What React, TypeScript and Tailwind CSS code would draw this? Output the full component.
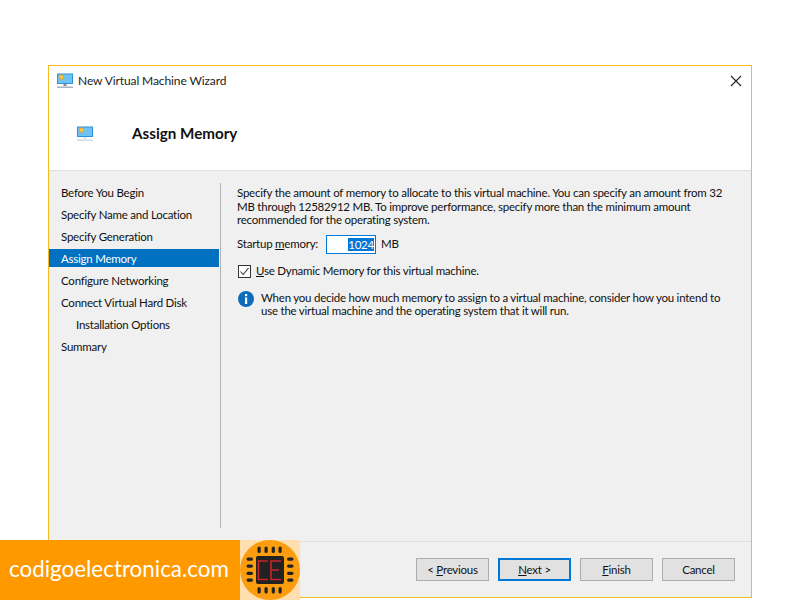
const steps = [
  { label: "Before You Begin" },
  { label: "Specify Name and Location" },
  { label: "Specify Generation" },
  { label: "Assign Memory", active: true },
  { label: "Configure Networking" },
  { label: "Connect Virtual Hard Disk" },
  { label: "Installation Options", indent: true },
  { label: "Summary" },
];

function VmIcon({ faded }: { faded?: boolean }) {
  return (
    <svg viewBox="0 0 16 16" width="16" height="16">
      <rect x="0" y="0.5" width="16" height="10.5" fill="#2f8fd8" />
      <rect x="1" y="1.5" width="14" height="8.5" fill="#6fc3f3" />
      <circle cx="4.5" cy="4" r="2.6" fill="#f5a623" />
      <circle cx="4.5" cy="4" r="1.3" fill="#ffd75e" />
      <rect x="6.5" y="11" width="3" height="2" fill={faded ? "#dfe3e6" : "#7d8a94"} />
      <rect x="0" y="13.5" width="16" height="1.5" fill={faded ? "#d5dadd" : "#a9b4bc"} />
    </svg>
  );
}

function WizardButton({ children, focused }: { children: React.ReactNode; focused?: boolean }) {
  return (
    <button
      className={
        focused
          ? "w-[73px] h-[23px] bg-[#e1e1e1] border-2 border-[#0078d7] text-[11.5px] tracking-[-0.23px] text-[#111] flex items-center justify-center"
          : "w-[73px] h-[23px] bg-[#e1e1e1] border border-[#adadad] text-[11.5px] tracking-[-0.23px] text-[#111] flex items-center justify-center"
      }
    >
      <span>{children}</span>
    </button>
  );
}

function Logo() {
  return (
    <svg viewBox="0 0 60 60" width="60" height="60">
      <circle cx="30" cy="30" r="30" fill="#fb9d0f" />
      <g fill="#222">
        <rect x="16" y="16" width="28" height="28" rx="2" />
        <rect x="17.5" y="6.5" width="3.2" height="6.5" rx="1.6" />
        <rect x="24.5" y="6.5" width="3.2" height="6.5" rx="1.6" />
        <rect x="31.7" y="6.5" width="3.2" height="6.5" rx="1.6" />
        <rect x="38.5" y="6.5" width="3.2" height="6.5" rx="1.6" />
        <rect x="17.5" y="47" width="3.2" height="6.5" rx="1.6" />
        <rect x="24.5" y="47" width="3.2" height="6.5" rx="1.6" />
        <rect x="31.7" y="47" width="3.2" height="6.5" rx="1.6" />
        <rect x="38.5" y="47" width="3.2" height="6.5" rx="1.6" />
        <rect x="6.5" y="17.5" width="6.5" height="3.2" rx="1.6" />
        <rect x="6.5" y="24.5" width="6.5" height="3.2" rx="1.6" />
        <rect x="6.5" y="31.7" width="6.5" height="3.2" rx="1.6" />
        <rect x="6.5" y="38.5" width="6.5" height="3.2" rx="1.6" />
        <rect x="47" y="17.5" width="6.5" height="3.2" rx="1.6" />
        <rect x="47" y="24.5" width="6.5" height="3.2" rx="1.6" />
        <rect x="47" y="31.7" width="6.5" height="3.2" rx="1.6" />
        <rect x="47" y="38.5" width="6.5" height="3.2" rx="1.6" />
      </g>
      <path d="M28 21H18.5V39.5H28M41 21H31V39.5H41M31 30H39" fill="none" stroke="#c8262c" strokeWidth="1.6" />
    </svg>
  );
}

export default function App() {
  return (
    <div className="relative w-[800px] h-[600px] overflow-hidden bg-white pt-[65px] pl-[48px] font-['Lato',sans-serif] text-[11.5px] tracking-[-0.23px] text-[#111]">
      <div className="w-[704px] h-[533px] border border-[#f6b922] flex flex-col bg-[#f0f0f0]">
        {/* title + header */}
        <div className="h-[105px] bg-white border-b border-[#dfdfdf] shrink-0">
          <div className="h-[30px] flex items-center pl-[8px] pr-[9px]">
            <VmIcon />
            <span className="ml-[5px] text-[12px] tracking-[-0.1px] text-[#222]">New Virtual Machine Wizard</span>
            <svg className="ml-auto" viewBox="0 0 12 12" width="12" height="12">
              <path d="M1 1L11 11M11 1L1 11" stroke="#222" strokeWidth="1.1" fill="none" />
            </svg>
          </div>
          <div className="flex items-center pl-[28px] mt-[28px]">
            <VmIcon faded />
            <span className="ml-[39px] -mt-[2px] text-[15.2px] tracking-normal font-bold text-[#111]">Assign Memory</span>
          </div>
        </div>

        {/* body */}
        <div className="flex-1 flex pt-[12px] min-h-0">
          <div className="w-[170px] shrink-0">
            {steps.map((s) => (
              <div
                key={s.label}
                className={
                  s.active
                    ? "h-[18px] mb-[4px] pt-px flex items-center pl-[12px] bg-[#0070c0] text-white"
                    : s.indent
                      ? "h-[18px] mb-[4px] pt-px flex items-center pl-[27px]"
                      : "h-[18px] mb-[4px] pt-px flex items-center pl-[12px]"
                }
              >
                {s.label}
              </div>
            ))}
          </div>
          <div className="ml-px w-px h-[345px] bg-[#b4b4b4] shrink-0" />
          <div className="flex-1 pl-[16px] pt-[3px]">
            <p className="leading-[13.5px] m-0 whitespace-nowrap">
              Specify the amount of memory to allocate to this virtual machine. You can specify an amount from 32
              <br />
              MB through 12582912 MB. To improve performance, specify more than the minimum amount
              <br />
              recommended for the operating system.
            </p>
            <div className="flex items-center mt-[8px] h-[19px]">
              <span className="w-[89px]">
                Startup <u>m</u>emory:
              </span>
              <div className="w-[50px] h-[19px] border border-[#0078d7] bg-white flex items-center justify-end pr-[1px]">
                <span className="bg-[#0078d7] text-white leading-[13px]">1024</span>
              </div>
              <span className="ml-[5px]">MB</span>
            </div>
            <div className="flex items-center mt-[11px] h-[13px] pl-px">
              <span className="w-[13px] h-[13px] border border-[#333] bg-white flex items-center justify-center shrink-0">
                <svg viewBox="0 0 11 11" width="11" height="11">
                  <path d="M1.5 5.5L4.2 8.5L9.5 2" stroke="#333" strokeWidth="1.1" fill="none" />
                </svg>
              </span>
              <span className="ml-[5px]">
                <u>U</u>se Dynamic Memory for this virtual machine.
              </span>
            </div>
            <div className="flex mt-[13px] pl-px">
              <svg className="shrink-0" viewBox="0 0 16 16" width="16" height="16">
                <circle cx="8" cy="8" r="8" fill="#0f6cbd" />
                <rect x="7" y="3" width="2.2" height="2.2" fill="#fff" />
                <rect x="7" y="6.5" width="2.2" height="6.5" fill="#fff" />
              </svg>
              <p className="ml-[7px] leading-[13.5px] m-0 whitespace-nowrap">
                When you decide how much memory to assign to a virtual machine, consider how you intend to
                <br />
                use the virtual machine and the operating system that it will run.
              </p>
            </div>
          </div>
        </div>

        {/* footer */}
        <div className="h-[56px] shrink-0 border-t border-[#dfdfdf] flex justify-end items-start gap-[9px] pt-[16px] pr-[16px]">
          <WizardButton>
            &lt; <u>P</u>revious
          </WizardButton>
          <WizardButton focused>
            <u>N</u>ext &gt;
          </WizardButton>
          <WizardButton>
            <u>F</u>inish
          </WizardButton>
          <WizardButton>Cancel</WizardButton>
        </div>
      </div>

      {/* watermark */}
      <div className="absolute left-0 top-[540px] w-[300px] h-[60px] flex">
        <div className="w-[240px] h-[60px] pb-[2px] bg-[#ff9900] flex items-center pl-[9px] font-['Lato',sans-serif] text-[22.4px] tracking-normal text-white">
          codigoelectronica.com
        </div>
        <div className="w-[60px] h-[60px] bg-[#ffdfb0]">
          <Logo />
        </div>
      </div>
    </div>
  );
}
